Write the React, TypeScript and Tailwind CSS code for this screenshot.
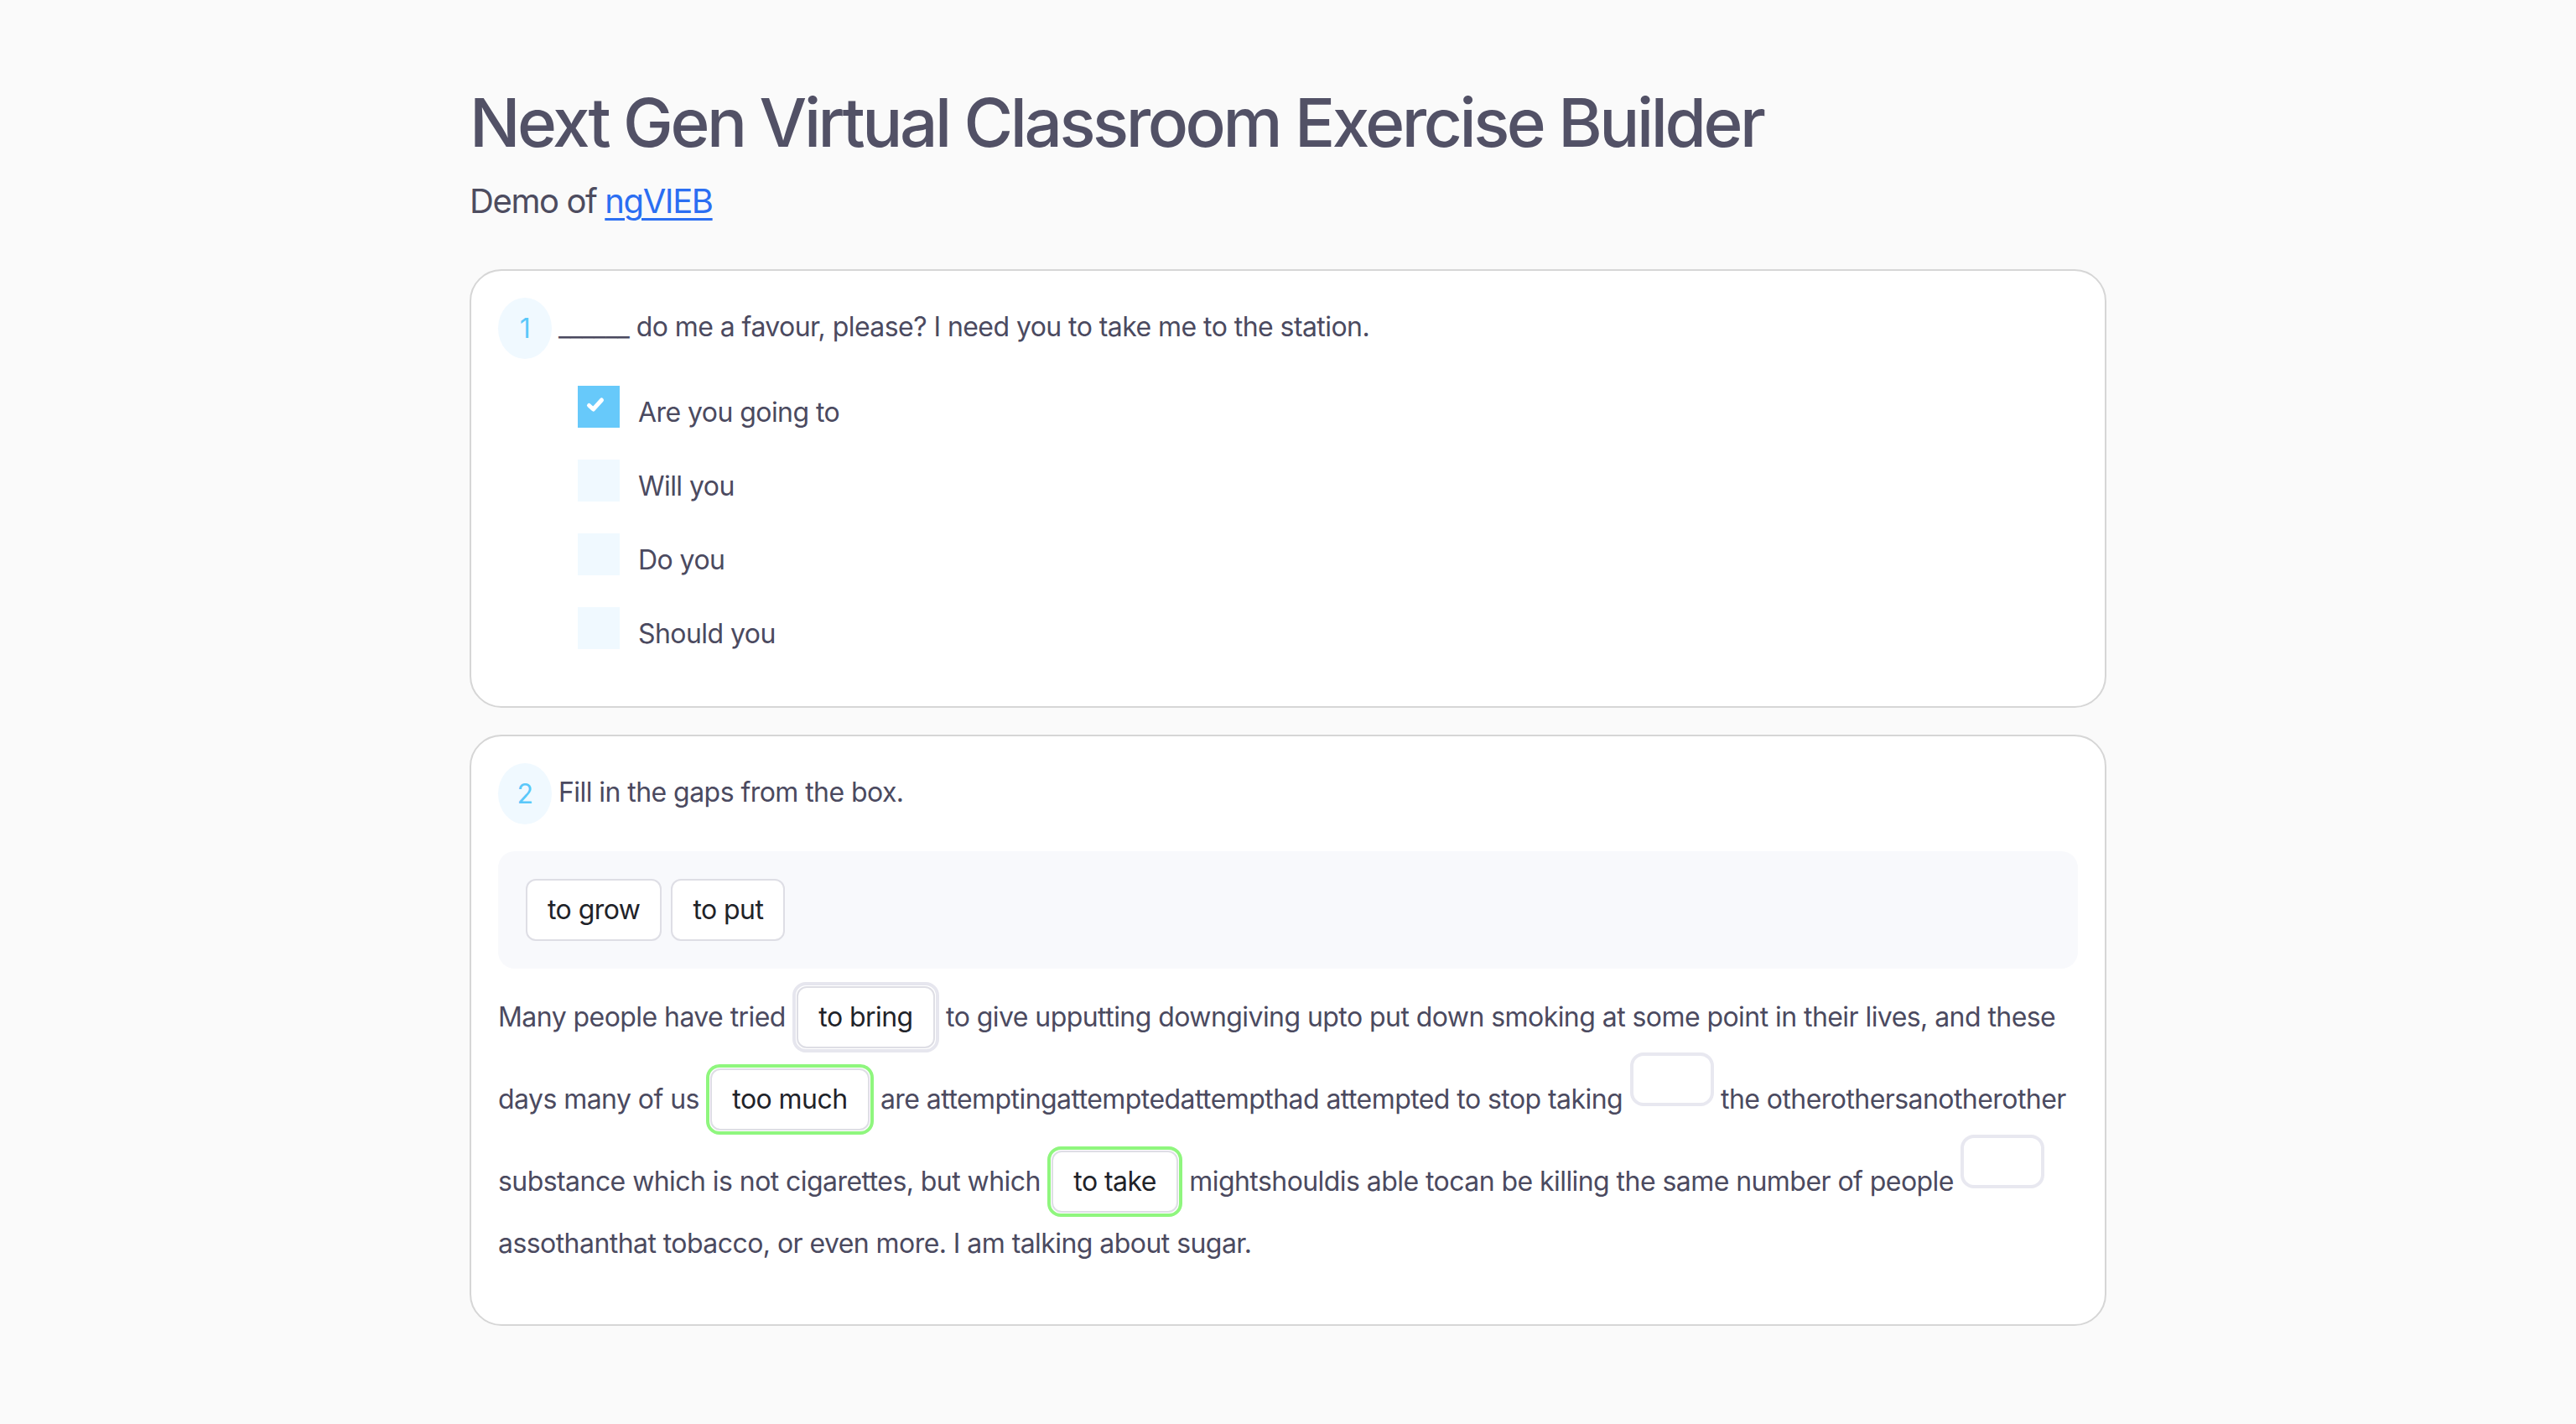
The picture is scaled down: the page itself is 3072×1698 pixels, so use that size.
import React from "react";

function FilledGap({ word, correct }: { word: string; correct?: boolean }) {
  return (
    <span
      className={
        "inline-block align-baseline rounded-[16px] border-4 p-[1px] " +
        (correct ? "border-[#8ff67e]" : "border-[#e6e6ee]")
      }
    >
      <span className="block rounded-[12px] border-2 border-[#dedee5] bg-white px-6 py-[11px] text-[32px] leading-[48px] text-[#1f2329]">
        {word}
      </span>
    </span>
  );
}

function EmptyGap() {
  return (
    <span className="inline-block align-baseline mb-[3px] h-[64px] w-[100px] rounded-[16px] border-4 border-[#e8e8f0] bg-white" />
  );
}

function Badge({ n }: { n: number }) {
  return (
    <div className="flex h-[73px] w-[64px] shrink-0 items-center justify-center rounded-[50%] bg-[#f0f9ff] text-[32px] leading-[48px] text-[#5ac8fa]">
      {n}
    </div>
  );
}

function Option({ label, checked }: { label: string; checked?: boolean }) {
  return (
    <div className="flex items-start gap-[22px]">
      <div
        className={
          "flex h-[50px] w-[50px] shrink-0 items-start justify-center " +
          (checked ? "bg-[#67c9fa]" : "bg-[#f0f9ff]")
        }
      >
        {checked && (
          <svg width="50" height="50" viewBox="0 0 50 50">
            <path
              d="M15.5 29.5 L20.5 34 L30.5 23"
              fill="none"
              stroke="#ffffff"
              strokeWidth="5"
              strokeLinecap="round"
              strokeLinejoin="round"
              transform="translate(-2 -6)"
            />
          </svg>
        )}
      </div>
      <span className="mt-2 text-[32px] leading-[48px] text-[#4b4a5f]">{label}</span>
    </div>
  );
}

export default function App() {
  return (
    <div
      className="min-h-screen bg-[#fafafa] tracking-[-0.035em]"
      style={{ fontFamily: "Inter, 'Noto Sans', sans-serif" }}
    >
      <div className="mx-auto w-[1952px] pt-[98px] pb-[120px]">
        <h1 className="text-[80px] font-medium leading-[96px] tracking-[-0.043em] text-[#525166]">
          Next Gen Virtual Classroom Exercise Builder
        </h1>
        <p className="mt-4 text-[40px] leading-[60px] tracking-[-0.035em] text-[#4d4c5f]">
          Demo of{" "}
          <a href="#" className="text-[#2b6ef2] underline decoration-[3px] underline-offset-[6px]">
            ngVIEB
          </a>
        </p>

        <div className="mt-[51px] rounded-[38px] border-2 border-[#d6d6d6] bg-white p-8">
          <div className="flex items-center gap-2">
            <Badge n={1} />
            <span className="-mt-1 text-[32px] leading-[48px] text-[#4b4a5f]">
              ______ do me a favour, please? I need you to take me to the station.
            </span>
          </div>
          <div className="mt-8 mb-[30px] ml-[95px] flex flex-col gap-8">
            <Option label="Are you going to" checked />
            <Option label="Will you" />
            <Option label="Do you" />
            <Option label="Should you" />
          </div>
        </div>

        <div className="mt-[32px] rounded-[38px] border-2 border-[#d6d6d6] bg-white p-8">
          <div className="flex items-center gap-2">
            <Badge n={2} />
            <span className="-mt-1 text-[32px] leading-[48px] text-[#4b4a5f]">
              Fill in the gaps from the box.
            </span>
          </div>
          <div className="mt-8 flex gap-[11px] rounded-[20px] bg-[#f8f9fc] p-[33px]">
            <span className="rounded-[12px] border-2 border-[#dedee5] bg-white px-6 py-[11px] text-[32px] leading-[48px] text-[#1f2329]">
              to grow
            </span>
            <span className="rounded-[12px] border-2 border-[#dedee5] bg-white px-6 py-[11px] text-[32px] leading-[48px] text-[#1f2329]">
              to put
            </span>
          </div>
          <p className="mt-4 mb-8 text-[32px] leading-[64px] text-[#4b4a5f]">
            Many people have tried <FilledGap word="to bring" /> to give upputting downgiving upto put down
            smoking at some point in their lives, and these days many of us{" "}
            <FilledGap word="too much" correct /> are attemptingattemptedattempthad attempted to stop
            taking <EmptyGap /> the otherothersanotherother substance which is not cigarettes, but which{" "}
            <FilledGap word="to take" correct /> mightshouldis able tocan be killing the same number of
            people <EmptyGap /> assothanthat tobacco, or even more. I am talking about sugar.
          </p>
        </div>
      </div>
    </div>
  );
}
